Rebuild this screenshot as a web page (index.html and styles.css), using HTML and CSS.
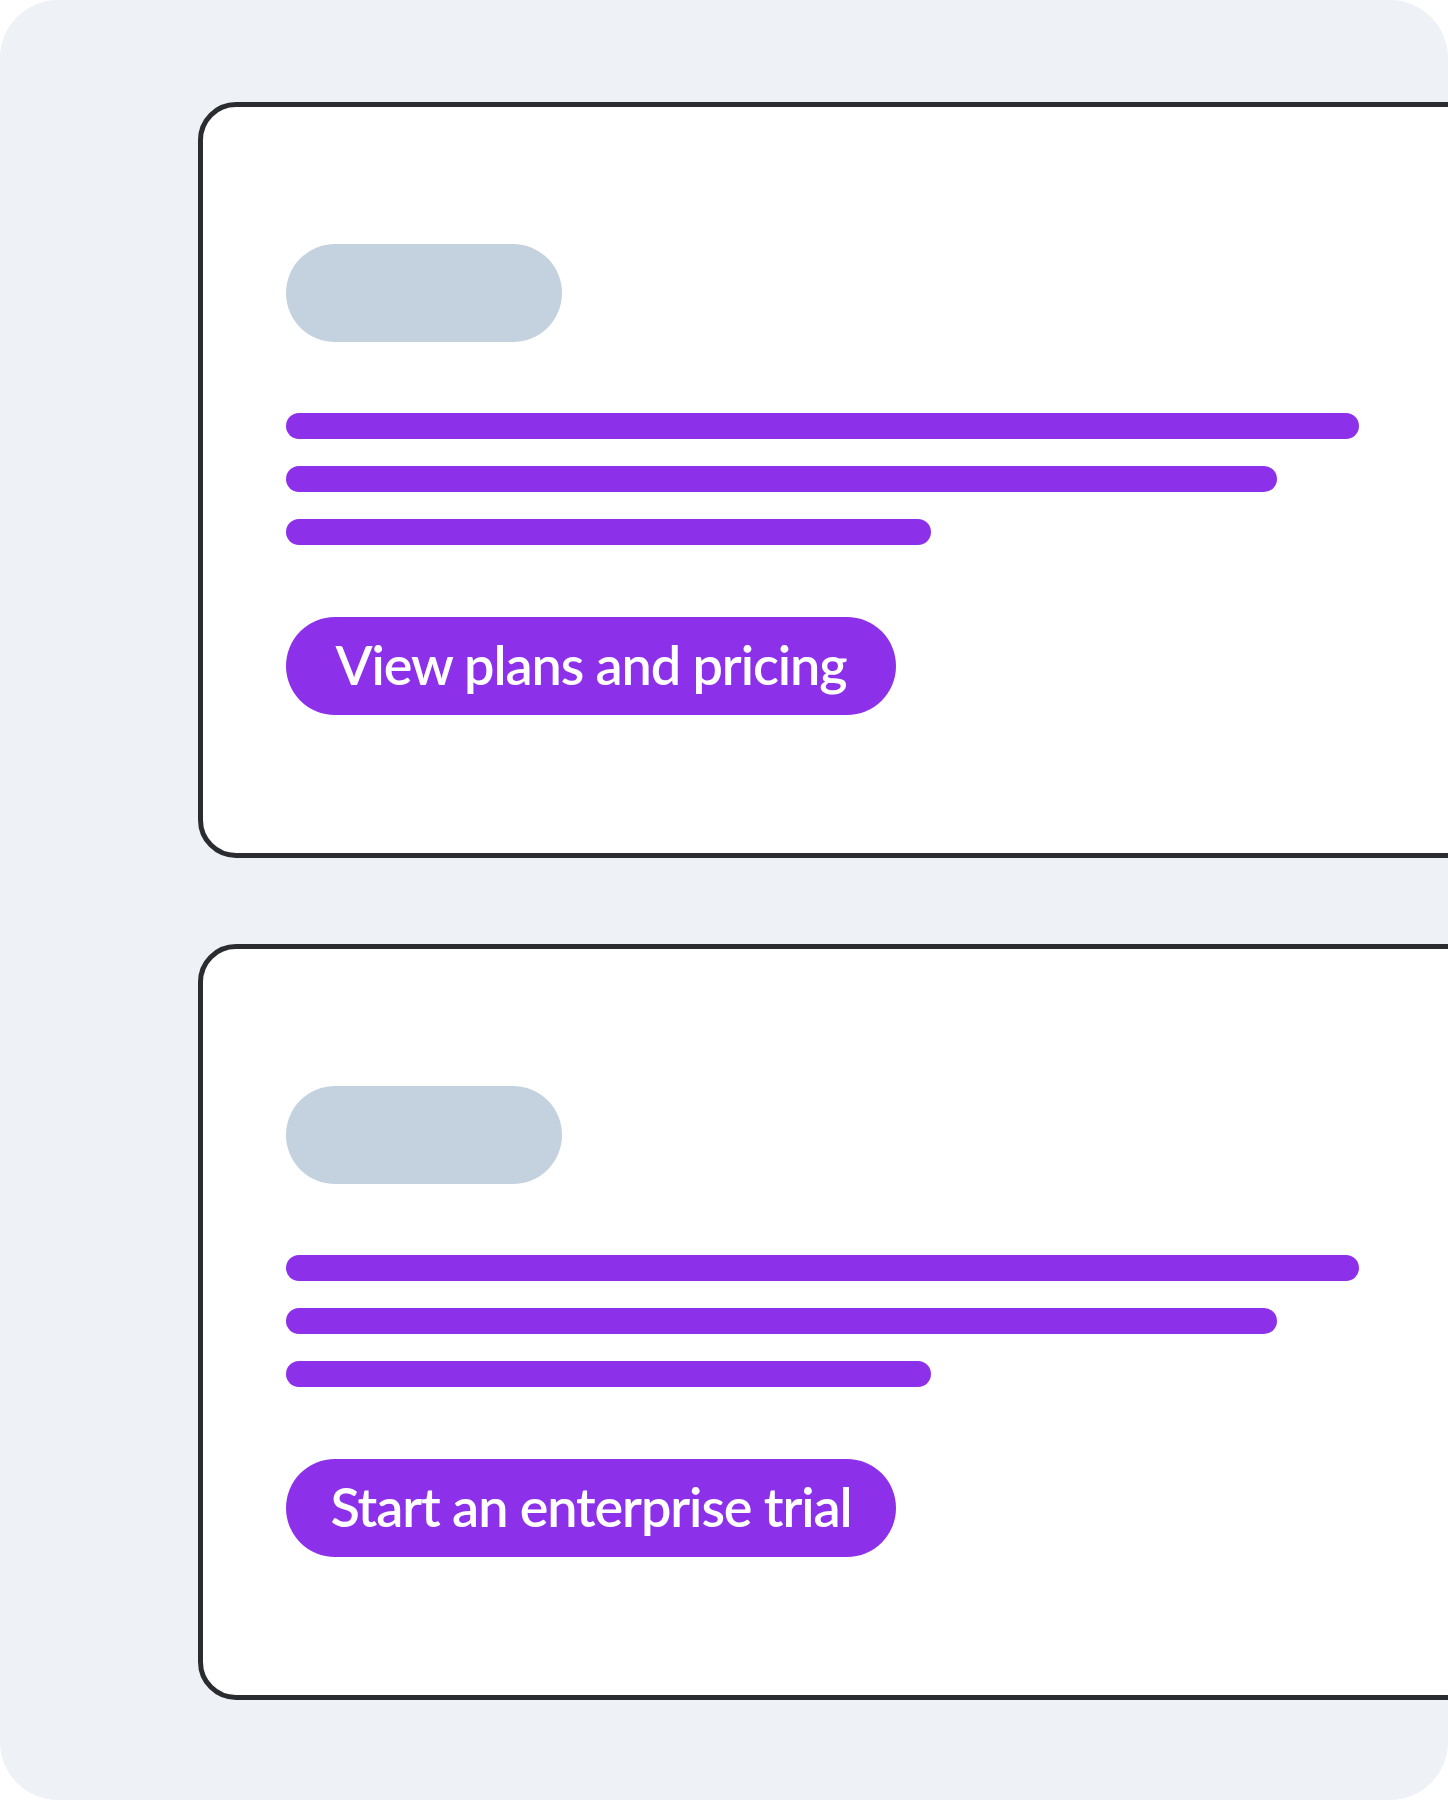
FILE: index.html
```html
<!DOCTYPE html>
<html lang="en">
<head>
<meta charset="utf-8">
<title>Cards</title>
<link rel="stylesheet" href="styles.css">
</head>
<body>
<div class="canvas">
  <div class="card">
    <div class="tag"></div>
    <div class="lines">
      <div class="line line-1"></div>
      <div class="line line-2"></div>
      <div class="line line-3"></div>
    </div>
    <a class="btn">View plans and pricing</a>
  </div>
  <div class="card">
    <div class="tag"></div>
    <div class="lines">
      <div class="line line-1"></div>
      <div class="line line-2"></div>
      <div class="line line-3"></div>
    </div>
    <a class="btn">Start an enterprise trial</a>
  </div>
</div>
</body>
</html>
```
FILE: styles.css
```css
html, body {
  margin: 0;
  padding: 0;
  background: #ffffff;
}

.canvas {
  width: 1448px;
  height: 1800px;
  box-sizing: border-box;
  background: #eef1f6;
  border-radius: 58px;
  overflow: hidden;
  padding: 102px 0 0 198px;
  display: flex;
  flex-direction: column;
  gap: 86px;
}

.card {
  flex: none;
  width: 1400px;
  height: 756px;
  box-sizing: border-box;
  background: #ffffff;
  border: 5px solid #2b2c30;
  border-radius: 38px;
  padding: 137px 0 0 83px;
  display: flex;
  flex-direction: column;
  align-items: flex-start;
}

.tag {
  width: 276px;
  height: 98px;
  border-radius: 49px;
  background: #c4d2df;
}

.lines {
  margin-top: 71px;
  display: flex;
  flex-direction: column;
  gap: 27px;
}

.line {
  height: 26px;
  border-radius: 13px;
  background: #8d30e9;
}

.line-1 { width: 1073px; }
.line-2 { width: 991px; }
.line-3 { width: 645px; }

.btn {
  margin-top: 72px;
  width: 610px;
  height: 98px;
  box-sizing: border-box;
  border-radius: 49px;
  background: #8d30e9;
  color: #ffffff;
  display: flex;
  align-items: center;
  justify-content: center;
  font-family: "Lato", "Noto Sans", sans-serif;
  font-weight: 600;
  font-size: 54px;
  letter-spacing: -1.1px;
  text-decoration: none;
  padding-bottom: 4px;
}
```
